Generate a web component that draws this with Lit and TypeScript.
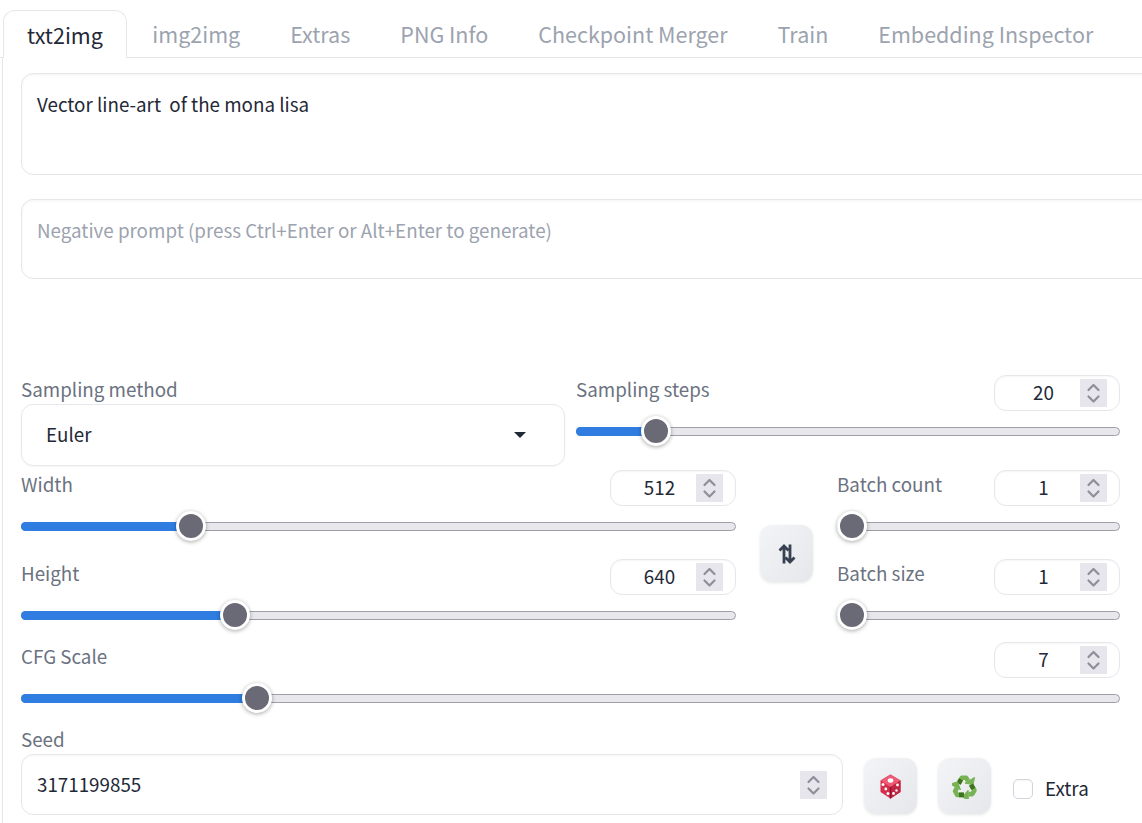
import { LitElement, html, css, svg } from "lit";
import { customElement, property } from "lit/decorators.js";

const chevrons = html`<svg class="chev" viewBox="0 0 27 28" width="27" height="28" aria-hidden="true">
  <path d="M8.5 11 L13.5 6 L18.5 11 M8.5 17.5 L13.5 22.5 L18.5 17.5" fill="none" stroke="#8f8e9a" stroke-width="2.2" stroke-linecap="round" stroke-linejoin="round"/>
</svg>`;

@customElement("num-box")
class NumBox extends LitElement {
  @property() value = "";
  static styles = css`
    :host { display: flex; align-items: center; width: 126px; height: 36px; box-sizing: border-box;
      border: 1px solid #e5e7eb; border-radius: 12px; background: #fff;
      box-shadow: inset 0 1px 2px rgba(0,0,0,.04); font-size: 18.8px; color: #1f2937; }
    .v { flex: 1; text-align: center; padding: 0 0 4px 12px; }
    .spin { width: 27px; height: 28px; background: #e6e6ec; margin-right: 12px; display: flex; }
  `;
  render() {
    return html`<span class="v">${this.value}</span><span class="spin">${chevrons}</span>`;
  }
}

@customElement("range-row")
class RangeRow extends LitElement {
  @property() label = "";
  @property() value = "";
  @property({ type: Number }) pct = 0;
  static styles = css`
    :host { display: block; }
    .head { display: flex; justify-content: space-between; align-items: flex-start; height: 36px; }
    .label { color: #6b7280; font-size: 18.8px; line-height: 28px; }
    .zone { height: 40px; display: flex; align-items: center; }
    .track { position: relative; flex: 1; height: 9px; box-sizing: border-box; background: #e8e8ec;
      border: 1px solid #a09ea9; border-radius: 5px; }
    .fill { position: absolute; left: -1px; top: -1px; bottom: -1px; background: #2f7de1; border-radius: 5px 0 0 5px; }
    .thumb { position: absolute; top: 50%; width: 24px; height: 24px; box-sizing: content-box;
      transform: translate(-50%, -50%); background: #6a6976; border: 3px solid #fff; border-radius: 50%;
      box-shadow: 0 1px 4px rgba(0,0,0,.35); }
  `;
  render() {
    return html`
      <div class="head"><span class="label">${this.label}</span><num-box value=${this.value}></num-box></div>
      <div class="zone"><div class="track">
        <div class="fill" style="width:${this.pct}%"></div>
        <div class="thumb" style="left:${this.pct}%"></div>
      </div></div>`;
  }
}

const dice = html`<svg width="21" height="25" viewBox="0 0 21 25" aria-hidden="true">
  <path d="M10.5 0.5 L20.5 6.5 V18 L10.5 24.5 L0.5 18 V6.5 Z" fill="#d42f4c"/>
  <path d="M10.5 0.5 L20.5 6.5 L10.5 13 L0.5 6.5 Z" fill="#ec5a75"/>
  <path d="M10.5 13 L20.5 6.5 V18 L10.5 24.5 Z" fill="#c02543"/>
  <path d="M10.5 13 V24.5" stroke="#8e1329" stroke-width="1.4"/>
  <ellipse cx="10.5" cy="6.5" rx="2.8" ry="2.2" fill="#fff"/>
  <circle cx="3" cy="10.5" r="1.5" fill="#fff"/><circle cx="5.8" cy="15" r="1.4" fill="#fff"/><circle cx="8" cy="19.5" r="1.5" fill="#fff"/>
  <circle cx="17.5" cy="11" r="1.4" fill="#fff"/><circle cx="13.5" cy="19.5" r="1.4" fill="#fff"/><circle cx="16.5" cy="16.5" r="1.2" fill="#fff"/>
</svg>`;

const arm = svg`
  <path d="M6.6 9.6 L9.8 3.8 H14.2 L16 7" fill="none" stroke="#77b255" stroke-width="4.6" stroke-linejoin="round"/>
  <path d="M13 9.2 L21 10.6 L22.6 3.4 Z" fill="#77b255" stroke="#77b255" stroke-linejoin="round"/>
  <path d="M6.6 9.6 L9 5.4" fill="none" stroke="#3e721d" stroke-width="4.6"/>`;
const recycle = html`<svg width="25" height="25" viewBox="0 0 25 25" aria-hidden="true">
  <g>${arm}</g>
  <g transform="rotate(120 12.5 13.7)">${arm}</g>
  <g transform="rotate(240 12.5 13.7)">${arm}</g>
</svg>`;

@customElement("app-root")
class AppRoot extends LitElement {
  static styles = css`
    :host { display: block; width: 1142px; height: 823px; overflow: hidden; background: #fff;
      font-family: "Noto Sans CJK JP", "Source Sans Pro", sans-serif; font-size: 18.8px; color: #1f2937; padding-top: 10px; box-sizing: border-box; }
    .tabs { display: flex; height: 48px; box-sizing: border-box; padding-left: 3px;
      border-bottom: 1px solid #e5e7eb; }
    .tab { padding: 0 24.5px; margin-left: 1px; line-height: 48px; font-size: 21.5px; color: #9ca3af; white-space: nowrap; }
    .tab.on { margin-left: 0; padding: 0 23px; height: 48px; box-sizing: border-box; background: #fff; color: #1f2937;
      border: 1px solid #e5e7eb; border-bottom: 0; border-radius: 12px 12px 0 0; line-height: 48px; }
    .panel { margin: 0 0 0 2px; padding: 15px 0 0 18px; border-left: 1px solid #e5e7eb; height: 765px; box-sizing: border-box; width: 1140px; }
    .box { box-sizing: border-box; border: 1px solid #e5e7eb; border-radius: 12px; background: #fff;
      box-shadow: inset 0 1px 3px rgba(0,0,0,.05); padding: 16px 15px; width: 1240px; line-height: 28px; }
    .p1 { height: 102px; margin-bottom: 24px; }
    .p2 { height: 80px; margin-bottom: 96px; color: #9ca3af; }
    .row1 { display: grid; grid-template-columns: 544px 544px; gap: 11px; width: 1099px; height: 91px; margin-bottom: 4px; }
    .label { color: #6b7280; line-height: 28px; }
    .left-head { height: 29px; }
    .select { box-sizing: border-box; height: 62px; border: 1px solid #e5e7eb; border-radius: 12px; display: flex;
      align-items: center; justify-content: space-between; padding: 0 38px 0 24px; box-shadow: 0 1px 2px rgba(0,0,0,.04); }
    .select .txt { padding-bottom: 4px; }
    .arrow { width: 0; height: 0; border: 6px solid transparent; border-top: 6px solid #1f2937; border-bottom: 0; }
    .row2 { display: grid; grid-template-columns: 715px 53px 283px; column-gap: 24px; width: 1099px; height: 165px; margin-bottom: 7px; }
    .col { display: flex; flex-direction: column; gap: 13px; }
    .btn { box-sizing: border-box; width: 53px; height: 57px; border-radius: 12px; display: flex; align-items: center; justify-content: center;
      background: linear-gradient(to bottom right, #f3f4f6, #e5e7eb); box-shadow: 0 1px 3px rgba(0,0,0,.1); padding: 0; }
    .swap { align-self: center; margin-top: 2px; }
    .cfg { width: 1099px; display: block; height: 76px; }
    .seed-label { margin-top: 7px; height: 29px; }
    .seed-row { display: flex; align-items: flex-start; margin-top: 0; }
    .seed { box-sizing: border-box; width: 822px; height: 61px; border: 1px solid #e5e7eb; border-radius: 12px; display: flex; align-items: center;
      padding: 0 15px; box-shadow: inset 0 1px 2px rgba(0,0,0,.04); justify-content: space-between; }
    .seed .txt { padding-bottom: 2px; }
    .spin { width: 27px; height: 28px; background: #e6e6ec; display: flex; }
    .seed-row .btn { margin-top: 4px; height: 56px; }
    .b1 { margin-left: 21px; }
    .b2 { margin-left: 21px; }
    .check { display: flex; align-items: center; margin-left: 22px; margin-top: 20px; height: 30px; }
    .check .txt { padding-bottom: 4px; }
    .cb { box-sizing: border-box; width: 20px; height: 20px; border: 1px solid #d1d5db; border-radius: 5px; background: #fff; margin-right: 12px;
      box-shadow: inset 0 1px 2px rgba(0,0,0,.04); }
  `;
  render() {
    const tabs = ["img2img", "Extras", "PNG Info", "Checkpoint Merger", "Train", "Embedding Inspector"];
    return html`
      <div class="tabs">
        <div class="tab on">txt2img</div>
        ${tabs.map((t) => html`<div class="tab">${t}</div>`)}
      </div>
      <div class="panel">
        <div class="box p1">Vector line-art&nbsp; of the mona lisa</div>
        <div class="box p2">Negative prompt (press Ctrl+Enter or Alt+Enter to generate)</div>
        <div class="row1">
          <div>
            <div class="label left-head">Sampling method</div>
            <div class="select"><span class="txt">Euler</span><span class="arrow"></span></div>
          </div>
          <range-row label="Sampling steps" value="20" pct="14.5"></range-row>
        </div>
        <div class="row2">
          <div class="col">
            <range-row label="Width" value="512" pct="23.7"></range-row>
            <range-row label="Height" value="640" pct="29.9"></range-row>
          </div>
          <div class="btn swap">
            <svg width="20" height="22" viewBox="0 0 20 22" fill="none" stroke="#374151" stroke-width="2.8" stroke-linejoin="miter" aria-hidden="true">
              <path d="M7 20.5 V3 M2.5 7.5 L7 3 L11.5 7.5 M13 1.5 V19 M8.5 14.5 L13 19 L17.5 14.5"/>
            </svg>
          </div>
          <div class="col">
            <range-row label="Batch count" value="1" pct="4.9"></range-row>
            <range-row label="Batch size" value="1" pct="4.9"></range-row>
          </div>
        </div>
        <range-row class="cfg" label="CFG Scale" value="7" pct="21.4"></range-row>
        <div class="label seed-label">Seed</div>
        <div class="seed-row">
          <div class="seed"><span class="txt">3171199855</span><span class="spin">${chevrons}</span></div>
          <div class="btn b1">${dice}</div>
          <div class="btn b2">${recycle}</div>
          <div class="check"><span class="cb"></span><span class="txt">Extra</span></div>
        </div>
      </div>`;
  }
}
